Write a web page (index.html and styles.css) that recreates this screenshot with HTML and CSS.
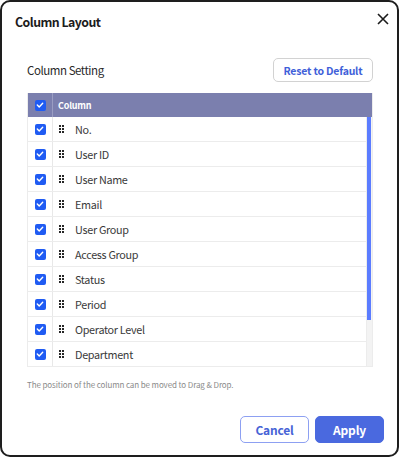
FILE: index.html
```html
<!DOCTYPE html>
<html>
<head>
<meta charset="utf-8">
<link rel="stylesheet" href="styles.css">
</head>
<body>
<div class="dialog">
  <div class="head">
    <div class="title">Column Layout</div>
    <svg class="close" width="12" height="12" viewBox="0 0 12 12"><path d="M1 1L11 11M11 1L1 11" stroke="#1b1b1b" stroke-width="1.6" fill="none"/></svg>
  </div>
  <div class="body">
    <div class="setting">
      <div class="label">Column Setting</div>
      <button class="reset">Reset to Default</button>
    </div>
    <div class="table">
      <div class="thead">
        <div class="cbcell hcb"><span class="cb"><svg width="8" height="8" viewBox="0 0 8 8"><path d="M1.3 4.1L3.2 5.9L6.7 2.2" stroke="#fff" stroke-width="1.4" fill="none" stroke-linecap="round" stroke-linejoin="round"/></svg></span></div>
        <div class="hname">Column</div>
      </div>
      <div class="tbody">
        <div class="rows">
          <div class="row"><div class="cbcell"><span class="cb"><svg width="8" height="8" viewBox="0 0 8 8"><path d="M1.3 4.1L3.2 5.9L6.7 2.2" stroke="#fff" stroke-width="1.4" fill="none" stroke-linecap="round" stroke-linejoin="round"/></svg></span></div><div class="name"><span class="grip"></span>No.</div></div>
          <div class="row"><div class="cbcell"><span class="cb"><svg width="8" height="8" viewBox="0 0 8 8"><path d="M1.3 4.1L3.2 5.9L6.7 2.2" stroke="#fff" stroke-width="1.4" fill="none" stroke-linecap="round" stroke-linejoin="round"/></svg></span></div><div class="name"><span class="grip"></span>User ID</div></div>
          <div class="row"><div class="cbcell"><span class="cb"><svg width="8" height="8" viewBox="0 0 8 8"><path d="M1.3 4.1L3.2 5.9L6.7 2.2" stroke="#fff" stroke-width="1.4" fill="none" stroke-linecap="round" stroke-linejoin="round"/></svg></span></div><div class="name"><span class="grip"></span>User Name</div></div>
          <div class="row"><div class="cbcell"><span class="cb"><svg width="8" height="8" viewBox="0 0 8 8"><path d="M1.3 4.1L3.2 5.9L6.7 2.2" stroke="#fff" stroke-width="1.4" fill="none" stroke-linecap="round" stroke-linejoin="round"/></svg></span></div><div class="name"><span class="grip"></span>Email</div></div>
          <div class="row"><div class="cbcell"><span class="cb"><svg width="8" height="8" viewBox="0 0 8 8"><path d="M1.3 4.1L3.2 5.9L6.7 2.2" stroke="#fff" stroke-width="1.4" fill="none" stroke-linecap="round" stroke-linejoin="round"/></svg></span></div><div class="name"><span class="grip"></span>User Group</div></div>
          <div class="row"><div class="cbcell"><span class="cb"><svg width="8" height="8" viewBox="0 0 8 8"><path d="M1.3 4.1L3.2 5.9L6.7 2.2" stroke="#fff" stroke-width="1.4" fill="none" stroke-linecap="round" stroke-linejoin="round"/></svg></span></div><div class="name"><span class="grip"></span>Access Group</div></div>
          <div class="row"><div class="cbcell"><span class="cb"><svg width="8" height="8" viewBox="0 0 8 8"><path d="M1.3 4.1L3.2 5.9L6.7 2.2" stroke="#fff" stroke-width="1.4" fill="none" stroke-linecap="round" stroke-linejoin="round"/></svg></span></div><div class="name"><span class="grip"></span>Status</div></div>
          <div class="row"><div class="cbcell"><span class="cb"><svg width="8" height="8" viewBox="0 0 8 8"><path d="M1.3 4.1L3.2 5.9L6.7 2.2" stroke="#fff" stroke-width="1.4" fill="none" stroke-linecap="round" stroke-linejoin="round"/></svg></span></div><div class="name"><span class="grip"></span>Period</div></div>
          <div class="row"><div class="cbcell"><span class="cb"><svg width="8" height="8" viewBox="0 0 8 8"><path d="M1.3 4.1L3.2 5.9L6.7 2.2" stroke="#fff" stroke-width="1.4" fill="none" stroke-linecap="round" stroke-linejoin="round"/></svg></span></div><div class="name"><span class="grip"></span>Operator Level</div></div>
          <div class="row"><div class="cbcell"><span class="cb"><svg width="8" height="8" viewBox="0 0 8 8"><path d="M1.3 4.1L3.2 5.9L6.7 2.2" stroke="#fff" stroke-width="1.4" fill="none" stroke-linecap="round" stroke-linejoin="round"/></svg></span></div><div class="name"><span class="grip"></span>Department</div></div>
        </div>
        <div class="track"><div class="thumb"></div></div>
      </div>
    </div>
    <div class="note">The position of the column can be moved to Drag &amp; Drop.</div>
  </div>
  <div class="foot">
    <button class="btn cancel">Cancel</button>
    <button class="btn apply">Apply</button>
  </div>
</div>
</body>
</html>
```
FILE: styles.css
```css
html, body {
  margin: 0;
  padding: 0;
  background: #fff;
}
.dialog {
  width: 399px;
  height: 457px;
  box-sizing: border-box;
  border: 2px solid #1e1e1e;
  border-radius: 10px;
  background: #fff;
  display: flex;
  flex-direction: column;
  font-family: "Noto Sans CJK KR", "Noto Sans", sans-serif;
  color: #222;
}
.head {
  display: flex;
  justify-content: space-between;
  align-items: center;
  height: 24px;
  padding: 8px 8px 0 13px;
}
.title {
  font-size: 12.3px;
  font-weight: 700;
  letter-spacing: -0.5px;
  color: #1c1c1c;
}
.close {
  margin-top: -6px;
}
.body {
  padding: 0 24px 0 25px;
  flex: 1;
}
.setting {
  display: flex;
  justify-content: space-between;
  align-items: center;
  margin-top: 24px;
}
.label {
  font-size: 11.5px;
  letter-spacing: -0.45px;
  color: #2a2a2a;
}
.reset {
  height: 24px;
  width: 100px;
  box-sizing: border-box;
  border: 1px solid #d2d2d2;
  border-radius: 5px;
  background: #fff;
  color: #3f5fd9;
  font-family: inherit;
  font-size: 10.5px;
  font-weight: 700;
  letter-spacing: -0.2px;
  padding: 0;
}
.table {
  margin-top: 11px;
  border: 1px solid #ececec;
  border-top: none;
}
.thead {
  display: flex;
  height: 24px;
  background: #7b7fae;
  color: #fff;
}
.cbcell {
  width: 24px;
  border-right: 1px solid #e8e8e8;
  display: flex;
  align-items: center;
  justify-content: center;
  flex: none;
}
.hcb {
  border-right-color: #9a9dc2;
}
.cb {
  width: 11px;
  height: 11px;
  border-radius: 2px;
  background: #1f5bf3;
  display: flex;
  align-items: center;
  justify-content: center;
}
.hname {
  display: flex;
  align-items: center;
  padding-left: 5px;
  font-size: 9px;
  font-weight: 700;
  letter-spacing: -0.2px;
}
.tbody {
  display: flex;
}
.rows {
  flex: 1;
}
.row {
  display: flex;
  height: 24px;
  border-bottom: 1px solid #ececec;
}
.row:last-child {
  border-bottom: none;
}
.name {
  display: flex;
  align-items: center;
  font-size: 10.8px;
  letter-spacing: -0.3px;
  color: #3a3a3a;
  padding-left: 6px;
}
.grip {
  width: 5px;
  height: 8px;
  margin-right: 11px;
  background-image: radial-gradient(circle at 1px 1px, #262626 0.95px, transparent 1.15px);
  background-size: 3px 3px;
}
.track {
  width: 5px;
  background: #f3f3f3;
  border-left: 1px solid #ececec;
}
.thumb {
  width: 4px;
  height: 203px;
  background: #5b7cff;
}
.note {
  margin-top: 12px;
  font-size: 8px;
  letter-spacing: -0.1px;
  color: #8a8a8a;
}
.foot {
  display: flex;
  justify-content: flex-end;
  gap: 6px;
  padding: 0 13px 12px 0;
}
.btn {
  width: 69px;
  height: 27px;
  box-sizing: border-box;
  border-radius: 5px;
  font-family: inherit;
  font-size: 12px;
  font-weight: 700;
  letter-spacing: -0.2px;
  padding: 0;
}
.cancel {
  background: #fff;
  border: 1px solid #8da0f2;
  color: #4763d6;
}
.apply {
  background: #4a69df;
  border: 1px solid #4a69df;
  color: #fff;
}
```
